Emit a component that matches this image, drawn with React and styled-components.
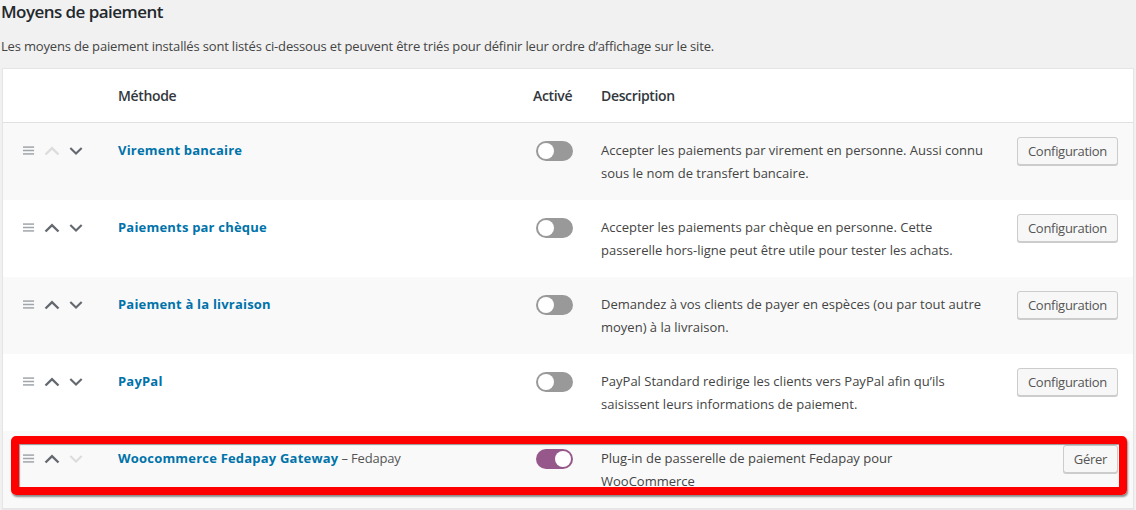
import React from "react";
import styled, { createGlobalStyle } from "styled-components";

const GlobalStyle = createGlobalStyle`
  html, body { margin: 0; padding: 0; }
  body {
    background: #f1f1f1;
    font-family: "Open Sans", "Noto Sans", "Liberation Sans", sans-serif;
    color: #444;
    -webkit-font-smoothing: antialiased;
  }
`;

const Page = styled.div`
  padding: 0 2px 0 2px;
  width: 1136px;
  box-sizing: border-box;
  overflow: hidden;
  height: 510px;
`;

const Title = styled.h2`
  margin: 0;
  padding: 1px 0 0 0;
  font-size: 17px;
  line-height: 22px;
  font-weight: 600;
  color: #23282d;
  letter-spacing: -0.55px;
  margin-left: -1px;
`;

const Intro = styled.p`
  margin: 13px 0 12px -1px;
  font-size: 13px;
  line-height: 20px;
  color: #444;
  letter-spacing: -0.17px;
`;

const Table = styled.div`
  background: #fff;
  border: 1px solid #e5e5e5;
  box-shadow: 0 1px 1px rgba(0, 0, 0, 0.04);
`;

const grid = `
  display: grid;
  grid-template-columns: 115px 416px 67px 1fr auto;
  align-items: start;
`;

const HeadRow = styled.div`
  ${grid}
  height: 53px;
  border-bottom: 1px solid #e1e1e1;
  align-items: center;
`;

const HeadCell = styled.div`
  font-size: 14px;
  font-weight: 600;
  color: #32373c;
  line-height: 22px;
  letter-spacing: -0.35px;
  margin-left: ${(p) => p.$shift || 0}px;
`;

const Row = styled.div`
  ${grid}
  position: relative;
  height: 77px;
  box-sizing: border-box;
  padding-top: 16px;
  background: ${(p) => (p.$striped ? "#f9f9f9" : "#fff")};
`;

const SortCell = styled.div`
  display: flex;
  align-items: center;
  height: 23px;
  padding-left: 20px;
`;

const IconBox = styled.span`
  display: inline-flex;
  width: ${(p) => p.$w}px;
  justify-content: center;
  align-items: center;
`;

const NameCell = styled.div`
  font-size: 13px;
  line-height: 23px;
`;

const MethodLink = styled.a`
  color: #0073aa;
  font-weight: 700;
  text-decoration: none;
  letter-spacing: 0.2px;
`;

const Sub = styled.span`
  color: #555;
  letter-spacing: -0.2px;
`;

const ToggleCell = styled.div`
  height: 23px;
  display: flex;
  align-items: center;
  margin-left: 2px;
`;

const Toggle = styled.span`
  position: relative;
  display: inline-block;
  width: 37px;
  height: 20px;
  border-radius: 10px;
  background: ${(p) => (p.$on ? "#96588a" : "#999")};
  &::after {
    content: "";
    position: absolute;
    top: 2px;
    left: ${(p) => (p.$on ? "19px" : "2px")};
    width: 16px;
    height: 16px;
    border-radius: 50%;
    background: #fff;
  }
`;

const DescCell = styled.div`
  font-size: 13px;
  line-height: 23px;
  color: #444;
  max-width: 387px;
  letter-spacing: 0;
`;

const ActionCell = styled.div`
  padding-right: 15px;
  margin-top: -2px;
`;

const Button = styled.button`
  height: 28px;
  box-sizing: border-box;
  padding: 0 10px;
  font-family: inherit;
  font-size: 13px;
  letter-spacing: -0.3px;
  color: #555;
  background: #f7f7f7;
  border: 1px solid #ccc;
  border-radius: 3px;
  box-shadow: 0 1px 0 #ccc;
  cursor: pointer;
`;

const Highlight = styled.div`
  position: absolute;
  left: 8px;
  right: 6px;
  top: 5px;
  bottom: 13px;
  border: 8px solid #ff0000;
  border-radius: 5px;
  box-shadow: 1px 2px 2px rgba(0, 0, 0, 0.45), inset 1px 1px 1px rgba(0, 0, 0, 0.4);
  pointer-events: none;
`;

const Menu = () => (
  <svg width="13" height="11" viewBox="0 0 13 11">
    <g fill="#a0a5aa">
      <rect x="0" y="1" width="12" height="1.6" />
      <rect x="0" y="4.7" width="12" height="1.6" />
      <rect x="0" y="8.4" width="12" height="1.6" />
    </g>
  </svg>
);

const Chevron = ({ up, disabled }) => (
  <svg width="16" height="10" viewBox="0 0 16 10">
    <path
      d={up ? "M1.5 8.5 L8 2.2 L14.5 8.5" : "M1.5 1.5 L8 7.8 L14.5 1.5"}
      fill="none"
      stroke={disabled ? "#dcdcde" : "#646970"}
      strokeWidth="2.4"
    />
  </svg>
);

const methods = [
  {
    name: "Virement bancaire",
    desc: "Accepter les paiements par virement en personne. Aussi connu sous le nom de transfert bancaire.",
    action: "Configuration",
    upDisabled: true,
  },
  {
    name: "Paiements par chèque",
    desc: "Accepter les paiements par chèque en personne. Cette passerelle hors-ligne peut être utile pour tester les achats.",
    action: "Configuration",
  },
  {
    name: "Paiement à la livraison",
    desc: "Demandez à vos clients de payer en espèces (ou par tout autre moyen) à la livraison.",
    action: "Configuration",
  },
  {
    name: "PayPal",
    desc: "PayPal Standard redirige les clients vers PayPal afin qu’ils saisissent leurs informations de paiement.",
    action: "Configuration",
  },
  {
    name: "Woocommerce Fedapay Gateway",
    sub: "Fedapay",
    desc: "Plug-in de passerelle de paiement Fedapay pour WooCommerce",
    action: "Gérer",
    downDisabled: true,
    on: true,
    highlight: true,
  },
];

export default function App() {
  return (
    <Page>
      <GlobalStyle />
      <Title>Moyens de paiement</Title>
      <Intro>
        Les moyens de paiement installés sont listés ci-dessous et peuvent être triés pour définir leur ordre d’affichage sur le site.
      </Intro>
      <Table>
        <HeadRow>
          <div />
          <HeadCell>Méthode</HeadCell>
          <HeadCell $shift={-1}>Activé</HeadCell>
          <HeadCell>Description</HeadCell>
          <div />
        </HeadRow>
        {methods.map((m, i) => (
          <Row key={m.name} $striped={i % 2 === 0}>
            <SortCell>
              <IconBox $w={12}>
                <Menu />
              </IconBox>
              <IconBox $w={34}>
                <Chevron up disabled={m.upDisabled} />
              </IconBox>
              <IconBox $w={14}>
                <Chevron disabled={m.downDisabled} />
              </IconBox>
            </SortCell>
            <NameCell>
              <MethodLink href="#">{m.name}</MethodLink>
              {m.sub && <Sub> – {m.sub}</Sub>}
            </NameCell>
            <ToggleCell>
              <Toggle $on={m.on} />
            </ToggleCell>
            <DescCell>{m.desc}</DescCell>
            <ActionCell>
              <Button>{m.action}</Button>
            </ActionCell>
            {m.highlight && <Highlight />}
          </Row>
        ))}
      </Table>
    </Page>
  );
}
